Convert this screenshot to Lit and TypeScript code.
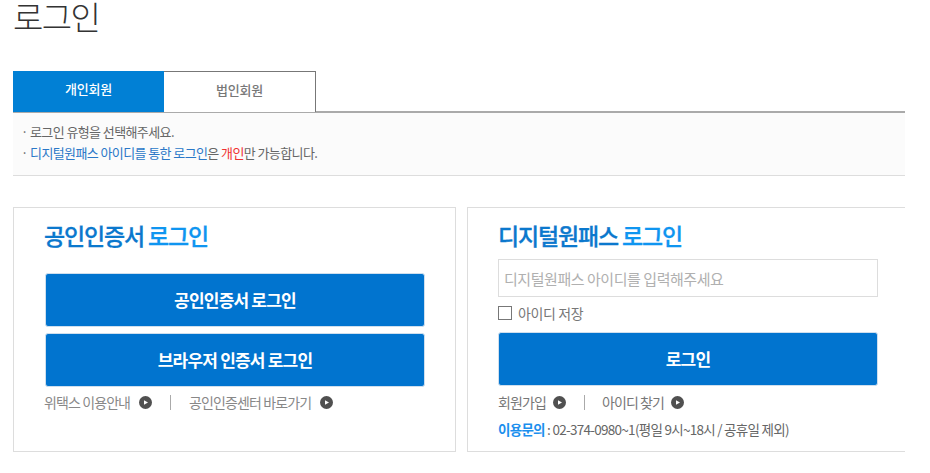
import { LitElement, html, css } from "lit";
import { customElement } from "lit/decorators.js";

const arrow = html`<svg class="arrow" viewBox="0 0 13 13" width="13" height="13"><circle cx="6.5" cy="6.5" r="6.5" fill="#505050"></circle><path d="M5 4.2 L9 6.5 L5 8.8 Z" fill="#fff"></path></svg>`;

@customElement("app-root")
export class AppRoot extends LitElement {
  static styles = css`
    :host {
      display: block;
      width: 930px;
      height: 473px;
      overflow: hidden;
      background: #fff;
      font-family: "Noto Sans CJK KR", "Noto Sans", sans-serif;
      color: #555;
      box-sizing: border-box;
      padding: 0 25px 0 13px;
    }
    h1 {
      margin: 0;
      height: 71px;
      box-sizing: border-box;
      font-size: 33px;
      font-weight: 300;
      line-height: 32px;
      letter-spacing: -1.6px;
      color: #333;
    }
    .tabs {
      display: flex;
      height: 42px;
      box-sizing: border-box;
      border-bottom: 2px solid #aaa;
    }
    .tab {
      width: 151px;
      height: 41px;
      box-sizing: border-box;
      display: flex;
      align-items: center;
      justify-content: center;
      font-size: 13px;
      font-weight: 500;
      letter-spacing: -0.2px;
      padding-bottom: 6px;
    }
    .tab.on { background: #0180d5; color: #fff; }
    .tab.off {
      width: 152px;
      border: 1px solid #777;
      border-left: 0;
      border-bottom: 0;
      background: #fff;
      color: #777;
    }
    .notice {
      height: 63px;
      box-sizing: border-box;
      background: #fbfbfb;
      border-bottom: 1px solid #ddd;
      padding: 8px 0 0 8px;
      font-size: 13px;
      line-height: 21px;
      letter-spacing: -0.6px;
      color: #666;
    }
    .blue { color: #2a78c8; }
    .red { color: #f03030; }
    .cards {
      display: flex;
      gap: 11px;
      margin-top: 31px;
      height: 245px;
    }
    .card {
      box-sizing: border-box;
      border: 1px solid #ddd;
      height: 245px;
    }
    .left { width: 443px; padding: 12px 31px 0 31px; }
    .right { width: 438px; border-right: 0; padding: 12px 26px 0 30px; }
    h2 {
      margin: 0;
      font-size: 23px;
      font-weight: 500;
      -webkit-text-stroke: 0.3px currentColor;
      line-height: 30px;
      letter-spacing: -1.15px;
      color: #0b78cd;
    }
    h2 span { color: #0f95f0; }
    .left h2 { margin-bottom: 23px; margin-left: -1px; }
    .right h2 { margin-bottom: 9px; }
    .btn {
      box-sizing: border-box;
      height: 54px;
      padding-bottom: 2px;
      background: #0174cf;
      border: 1px solid #cfdfee;
      border-radius: 3px;
      color: #fff;
      font-size: 17px;
      font-weight: 700;
      letter-spacing: -0.8px;
      display: flex;
      align-items: center;
      justify-content: center;
      width: 380px;
    }
    .stack { display: flex; flex-direction: column; gap: 6px; }
    .links {
      display: flex;
      align-items: center;
      font-size: 14px;
      letter-spacing: -0.9px;
      color: #888;
      height: 20px;
    }
    .links .arrow { margin-left: 9px; flex: none; }
    .sep { width: 1px; height: 15px; background: #aaa; margin: 0 18px 0 18px; }
    .left .links { margin-top: 5px; margin-left: -1px; }
    .right .links { margin-top: 6px; color: #777; }
    .right .links .arrow { margin-left: 7px; }
    .right .sep { margin-right: 17px; }
    .field {
      box-sizing: border-box;
      width: 380px;
      height: 38px;
      border: 1px solid #ddd;
      padding-left: 5px;
      display: flex;
      align-items: center;
      font-size: 15px;
      letter-spacing: -0.45px;
      color: #b0b0b0;
    }
    .save {
      display: flex;
      align-items: center;
      gap: 6px;
      height: 31px;
      font-size: 14px;
      letter-spacing: -0.4px;
      color: #777;
      margin-bottom: 4px;
    }
    .box { width: 14px; height: 14px; box-sizing: border-box; border: 1px solid #777; background: #fff; }
    .contact {
      margin-top: 7px;
      font-size: 13.5px;
      line-height: 20px;
      letter-spacing: -0.72px;
      color: #666;
    }
    .contact b { color: #1b8fee; font-weight: 700; }
  `;

  render() {
    return html`
      <h1>로그인</h1>
      <div class="tabs">
        <div class="tab on">개인회원</div>
        <div class="tab off">법인회원</div>
      </div>
      <div class="notice">
        <div>· 로그인 유형을 선택해주세요.</div>
        <div>· <span class="blue">디지털원패스 아이디를 통한 로그인</span>은 <span class="red">개인</span>만 가능합니다.</div>
      </div>
      <div class="cards">
        <section class="card left">
          <h2>공인인증서 <span>로그인</span></h2>
          <div class="stack">
            <div class="btn">공인인증서 로그인</div>
            <div class="btn">브라우저 인증서 로그인</div>
          </div>
          <div class="links">
            <span>위택스 이용안내</span>${arrow}<i class="sep"></i><span>공인인증센터 바로가기</span>${arrow}
          </div>
        </section>
        <section class="card right">
          <h2>디지털원패스 <span>로그인</span></h2>
          <div class="field">디지털원패스 아이디를 입력해주세요</div>
          <div class="save"><i class="box"></i><span>아이디 저장</span></div>
          <div class="btn">로그인</div>
          <div class="links">
            <span>회원가입</span>${arrow}<i class="sep"></i><span>아이디 찾기</span>${arrow}
          </div>
          <div class="contact"><b>이용문의</b> : 02-374-0980~1(평일 9시~18시 / 공휴일 제외)</div>
        </section>
      </div>
    `;
  }
}
